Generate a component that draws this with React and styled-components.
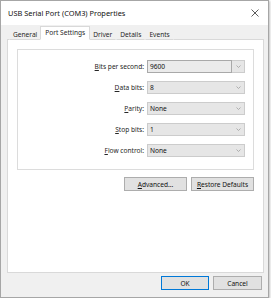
import React from 'react';
import styled, { createGlobalStyle } from 'styled-components';

const GlobalStyle = createGlobalStyle`
  html, body {
    margin: 0;
    background: #ffffff;
  }
  body {
    font-family: "Noto Sans", "Open Sans", sans-serif;
    font-size: 6.6px;
    color: #262626;
  }
`;

const Window = styled.div`
  width: 269px;
  height: 298px;
  box-sizing: border-box;
  border: 1px solid #a6a6a6;
  background: #f0f0f0;
  box-shadow: 1px 1px 2px rgba(0, 0, 0, 0.25);
  display: flex;
  flex-direction: column;
`;

const TitleBar = styled.div`
  height: 24px;
  background: #ffffff;
  display: flex;
  align-items: center;
  justify-content: space-between;
  padding: 0 9px 0 7px;
  font-size: 7.4px;
  color: #111;
`;

const Body = styled.div`
  flex: 1;
  display: flex;
  flex-direction: column;
  padding: 2px 4px 0 6px;
`;

const TabStrip = styled.div`
  height: 13px;
  display: flex;
  align-items: flex-end;
  padding-left: 2px;
  position: relative;
  z-index: 1;
`;

const Tab = styled.div`
  box-sizing: border-box;
  height: ${p => (p.$active ? '14px' : '11px')};
  padding: ${p => (p.$active ? '0 4px 2px' : '0 3px')};
  margin: ${p => (p.$active ? '0 -1px' : '0')};
  display: flex;
  align-items: center;
  background: ${p => (p.$active ? '#ffffff' : '#f0f0f0')};
  border: 1px solid ${p => (p.$active ? '#d9d9d9' : 'transparent')};
  border-bottom: ${p => (p.$active ? '1px solid #ffffff' : '1px solid #d9d9d9')};
  position: relative;
  z-index: ${p => (p.$active ? 2 : 1)};
`;

const Panel = styled.div`
  box-sizing: border-box;
  height: 234px;
  margin-top: -1px;
  background: #ffffff;
  border: 1px solid #d9d9d9;
  padding: 9px 9px 0;
  display: flex;
  flex-direction: column;
`;

const Group = styled.div`
  box-sizing: border-box;
  height: 121px;
  border: 1px solid #dcdcdc;
  padding-top: 10px;
  display: grid;
  grid-template-columns: 126px 98px;
  grid-auto-rows: 13px;
  column-gap: 3px;
  row-gap: 8px;
  align-content: start;
`;

const Label = styled.label`
  display: flex;
  align-items: center;
  justify-content: flex-end;
  white-space: nowrap;
`;

const Key = styled.span`
  text-decoration: underline;
  text-underline-offset: 1px;
  text-decoration-thickness: 0.5px;
`;

const Combo = styled.div`
  box-sizing: border-box;
  display: flex;
  align-items: stretch;
  background: #e6e6e6;
  border: 1px solid #cccccc;
  color: #111;
`;

const Field = styled.div`
  flex: 1;
  display: flex;
  align-items: center;
  padding-left: 2px;
  margin: ${p => (p.$editable ? '-1px 0 -1px -1px' : '0')};
  border: ${p => (p.$editable ? '1px solid #a9a9a9' : '0')};
  background: ${p => (p.$editable ? '#ebebeb' : 'transparent')};
`;

const Arrow = styled.div`
  width: 12px;
  display: flex;
  align-items: center;
  justify-content: center;
`;

const ButtonRow = styled.div`
  display: flex;
  justify-content: flex-end;
  gap: 4px;
  margin-top: 7px;
`;

const Button = styled.button`
  box-sizing: border-box;
  width: ${p => p.$w || 63}px;
  height: 14px;
  padding: 0;
  font: inherit;
  color: #111;
  background: #e1e1e1;
  border: 1px solid ${p => (p.$default ? '#0078d7' : '#adadad')};
  display: flex;
  align-items: center;
  justify-content: center;
`;

const Footer = styled.div`
  flex: 1;
  display: flex;
  justify-content: flex-end;
  align-items: flex-start;
  gap: 4px;
  padding: 3px 2px 0 0;
`;

const Chevron = () => (
  <svg width="5" height="3" viewBox="0 0 5 3">
    <path d="M0.5 0.5 L2.5 2.5 L4.5 0.5" fill="none" stroke="#a0a0a0" strokeWidth="0.8" />
  </svg>
);

const CloseIcon = () => (
  <svg width="8" height="8" viewBox="0 0 8 8">
    <path d="M0.5 0.5 L7.5 7.5 M7.5 0.5 L0.5 7.5" stroke="#333" strokeWidth="0.8" />
  </svg>
);

const rows = [
  { key: 'B', rest: 'its per second:', value: '9600', editable: true },
  { key: 'D', rest: 'ata bits:', value: '8' },
  { key: 'P', rest: 'arity:', value: 'None' },
  { key: 'S', rest: 'top bits:', value: '1' },
  { key: 'F', rest: 'low control:', value: 'None' },
];

const tabs = ['General', 'Port Settings', 'Driver', 'Details', 'Events'];

export default function App() {
  return (
    <>
      <GlobalStyle />
      <Window>
        <TitleBar>
          <span>USB Serial Port (COM3) Properties</span>
          <CloseIcon />
        </TitleBar>
        <Body>
          <TabStrip>
            {tabs.map(t => (
              <Tab key={t} $active={t === 'Port Settings'}>{t}</Tab>
            ))}
          </TabStrip>
          <Panel>
            <Group>
              {rows.map(r => (
                <React.Fragment key={r.rest}>
                  <Label><Key>{r.key}</Key>{r.rest}</Label>
                  <Combo>
                    <Field $editable={r.editable}>{r.value}</Field>
                    <Arrow><Chevron /></Arrow>
                  </Combo>
                </React.Fragment>
              ))}
            </Group>
            <ButtonRow>
              <Button><span><Key>A</Key>dvanced...</span></Button>
              <Button><span><Key>R</Key>estore Defaults</span></Button>
            </ButtonRow>
          </Panel>
          <Footer>
            <Button $w={48} $default>OK</Button>
            <Button $w={49}>Cancel</Button>
          </Footer>
        </Body>
      </Window>
    </>
  );
}
